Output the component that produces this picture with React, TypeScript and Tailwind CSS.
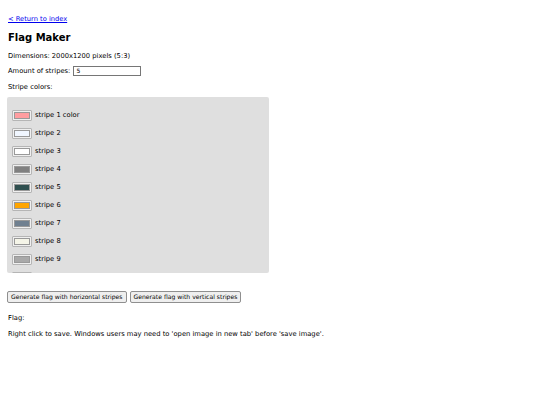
const stripes = [
  { label: "stripe 1 color", color: "#ff9da0" },
  { label: "stripe 2", color: "#f0f6ff" },
  { label: "stripe 3", color: "#ffffff" },
  { label: "stripe 4", color: "#808080" },
  { label: "stripe 5", color: "#2f4f4f" },
  { label: "stripe 6", color: "#ffa500" },
  { label: "stripe 7", color: "#708090" },
  { label: "stripe 8", color: "#f5f5e8" },
  { label: "stripe 9", color: "#a9a9a9" },
  { label: "", color: "#dcdcdc" },
];

export default function App() {
  return (
    <div className="min-h-[405px] bg-white px-2 pt-[15px] text-[6.75px] leading-[9px] text-black" style={{ fontFamily: '"DejaVu Sans", Verdana, sans-serif' }}>
      <a href="#" className="text-[6.7px] text-[#0000ee] underline">&lt; Return to index</a>
      <h1 className="mt-[7px] text-[10px] font-bold leading-[14px]">Flag Maker</h1>
      <p className="mt-[7px]">Dimensions: 2000x1200 pixels (5:3)</p>
      <div className="mt-[5px] flex items-center gap-[3px]">
        <span>Amount of stripes:</span>
        <div className="h-[10px] w-[68px] border border-[#767676] bg-white pl-[2px] text-[6px] leading-[8px]">5</div>
      </div>
      <p className="mt-[7px]">Stripe colors:</p>
      <div className="-ml-px mt-[5px] h-[176px] w-[262px] overflow-hidden rounded-[2px] bg-[#dfdfdf] px-[5px] pt-[13px]">
        <div className="flex flex-col gap-[7px]">
          {stripes.map((s, i) => (
            <div key={i} className="flex items-center gap-[3px]">
              <div className="flex h-[11px] w-[20px] items-center justify-center rounded-[1px] border border-[#b5b5b5] bg-[#efefef]">
                <div className="h-[7px] w-[16px] border border-[#999]" style={{ backgroundColor: s.color }} />
              </div>
              {s.label && <span>{s.label}</span>}
            </div>
          ))}
        </div>
      </div>
      <div className="-ml-px mt-[18px] flex gap-[3px]">
        <button className="h-[12px] rounded-[2px] border border-[#8f8f8f] bg-[#efefef] px-[3px] text-[6.1px] leading-[10px]">Generate flag with horizontal stripes</button>
        <button className="h-[12px] rounded-[2px] border border-[#8f8f8f] bg-[#efefef] px-[3px] text-[6.1px] leading-[10px]">Generate flag with vertical stripes</button>
      </div>
      <p className="mt-[11px]">Flag:</p>
      <p className="mt-[7px]">Right click to save. Windows users may need to 'open image in new tab' before 'save image'.</p>
    </div>
  );
}
